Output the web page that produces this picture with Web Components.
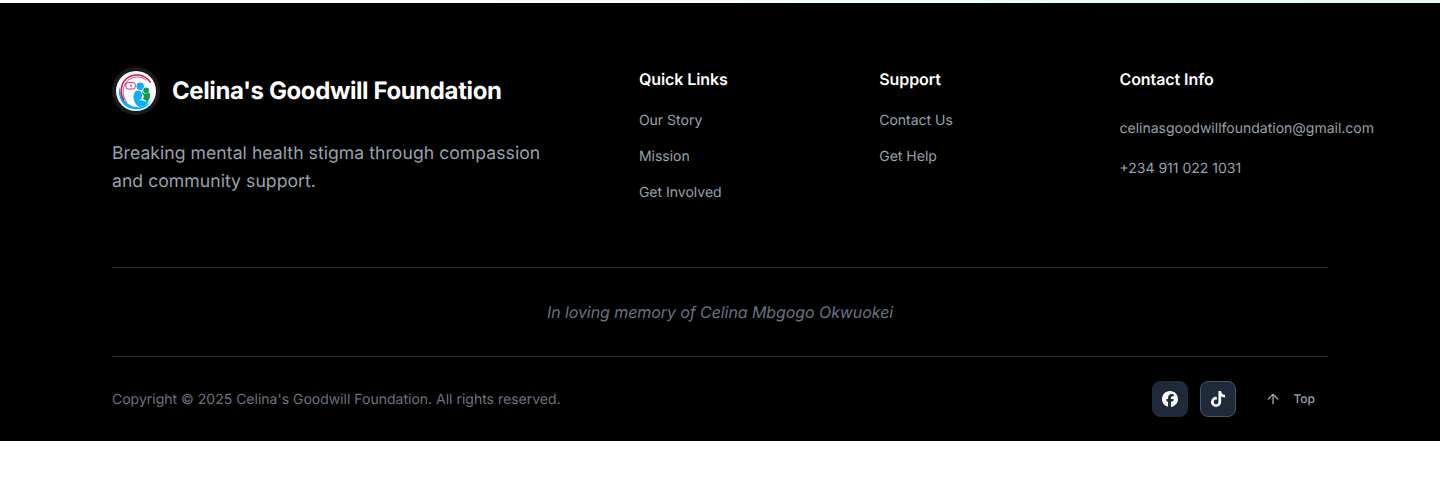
<!DOCTYPE html>
<html lang="en">
<head>
<meta charset="utf-8">
<title>Celina's Goodwill Foundation</title>
<style>
body{margin:0;background:#fff;font-family:Inter,"Liberation Sans",sans-serif;-webkit-font-smoothing:antialiased;text-rendering:geometricPrecision}
</style>
</head>
<body>
<site-footer></site-footer>
<script>
const define = (name, html) => customElements.define(name, class extends HTMLElement {
  constructor() {
    super();
    this.attachShadow({mode: 'open'}).innerHTML = html;
  }
});

define('brand-logo', `
<style>
:host{display:block;width:40px;height:40px;padding:4px;border-radius:50%;background:#1a1a1a}
svg{display:block}
</style>
<svg width="40" height="40" viewBox="0 0 40 40" fill="none">
  <circle cx="20" cy="20" r="20" fill="#fff"/>
  <path d="M3.500 16C.8 26 7 37.800 19.500 38.300c7.500 .3 13-3.300 15.500-8.300-4 4.500-9 6.800-14.500 6C12 35.500 4.500 28 3.500 16Z" fill="#0aaeff"/>
  <path d="M8 29.500C3.500 22.500 4.500 13.500 10 8 17 1.800 28.500 2.500 34.500 11.500" stroke="#cf175f" stroke-width="1.500"/>
  <path d="M11 32C5.500 25 5.500 14.500 12.500 9c6-4.500 13.500-3.500 18 .5" stroke="#cf175f" stroke-width=".8"/>
  <rect x="9.800" y="11.500" width="9.500" height="6.500" rx="2.500" fill="#fff" stroke="#cf175f" stroke-width=".9"/>
  <path d="M15 14.200v2.300M14 14.200h2" stroke="#cf175f" stroke-width=".8"/>
  <circle cx="24.200" cy="15.300" r="3.700" fill="#0aaeff"/>
  <circle cx="30.200" cy="19.300" r="2.900" fill="#0a9f50"/>
  <path d="M18.500 21.500c2.500-3 6-2.500 7.500 1 .8 2.500-1 4.500-.5 6 1 2 4 2 7.500 1-1.500 4.500-5 6-9.500 6.500-5-2.500-7.500-9-5-14.500Z" fill="#0aaeff"/>
  <path d="M25.500 19.500c1 2.300 3 3.500 5 3l2.800-1c1.700 3 .7 6.500-2.300 9-1.500-1.500-3.500-2-4.500-2 1.500-1.500 2-4 0-5.500Z" fill="#0a9f50"/>
  <path d="M23.500 29c2.500-.8 4.500-.3 6.500 1.500" stroke="#fff" stroke-width=".8"/>
</svg>`);

define('brand-block', `
<style>
:host{display:block}
.name{display:flex;align-items:center;gap:12px;color:#fff;font-size:24px;line-height:32px;font-weight:700;letter-spacing:-.4px;white-space:nowrap}
p{margin:25px 0 0;font-size:17.6px;line-height:28px;letter-spacing:.045px;color:#99a1af;max-width:448px}
</style>
<div class="name"><brand-logo></brand-logo><span><slot name="name"></slot></span></div>
<p><slot></slot></p>`);

define('link-column', `
<style>
:host{display:block}
h3{margin:0 0 18px;font-size:16px;line-height:24px;font-weight:600;letter-spacing:-.08px;color:#fff}
nav{display:flex;flex-direction:column;gap:var(--gap,12px);padding-top:var(--inset,0)}
</style>
<h3><slot name="title"></slot></h3><nav><slot></slot></nav>`);

define('footer-link', `
<style>
:host{display:block;font-size:14px;line-height:24px;color:#99a1af;white-space:nowrap}
</style><slot></slot>`);

define('social-button', `
<style>
:host{display:flex;box-sizing:border-box;width:36px;height:36px;align-items:center;justify-content:center;border-radius:8px;background:#1e2939;border:1px solid var(--edge,#1e2939);color:#fff}
</style><slot></slot>`);

define('top-button', `
<style>
:host{display:flex;align-items:center;gap:12px;margin-left:17px;padding-right:13px;font-size:12px;line-height:16px;font-weight:500;color:#99a1af}
svg{display:block}
</style>
<svg width="16" height="16" viewBox="0 0 24 24" fill="none" stroke="currentColor" stroke-width="2" stroke-linecap="round" stroke-linejoin="round"><path d="m5 12 7-7 7 7M12 19V5"/></svg><slot></slot>`);

define('site-footer', `
<style>
:host{display:block;padding-top:3px;background:linear-gradient(90deg,#fff,#f6fffa 50%,#e6faf0)}
footer{height:438px;background:#000;box-sizing:border-box;padding:64px 112px 0}
.grid{display:grid;grid-template-columns:494.9px repeat(3,208.300px);column-gap:32px;height:200px;align-items:start}
.contact{--gap:16px;--inset:8px}
.memory{border:solid #1e2939;border-width:1px 0;height:88px;display:flex;align-items:center;justify-content:center;font-size:16px;font-style:italic;letter-spacing:-.08px;color:#6a7282}
.bar{display:flex;align-items:center;justify-content:space-between;height:84px;font-size:14px;color:#6a7282}
.actions{display:flex;align-items:center;gap:12px}
svg{display:block}
</style>
<footer>
  <div class="grid">
    <brand-block><span slot="name">Celina's Goodwill Foundation</span>Breaking mental health stigma through compassion and community support.</brand-block>
    <link-column><span slot="title">Quick Links</span><footer-link>Our Story</footer-link><footer-link>Mission</footer-link><footer-link>Get Involved</footer-link></link-column>
    <link-column><span slot="title">Support</span><footer-link>Contact Us</footer-link><footer-link>Get Help</footer-link></link-column>
    <link-column class="contact"><span slot="title">Contact Info</span><footer-link>celinasgoodwillfoundation@gmail.com</footer-link><footer-link>+234 911 022 1031</footer-link></link-column>
  </div>
  <div class="memory"><span>In loving memory of Celina Mbgogo Okwuokei</span></div>
  <div class="bar">
    <span class="copy">Copyright © 2025 Celina's Goodwill Foundation. All rights reserved.</span>
    <div class="actions">
      <social-button><svg width="16" height="16" viewBox="0 0 512 512" fill="currentColor"><path d="M512 256C512 114.600 397.400 0 256 0S0 114.600 0 256c0 120 82.700 220.800 194.200 248.500V334.200h-52.800V256h52.800v-33.700c0-87.100 39.400-127.500 125-127.500 16.200 0 44.200 3.200 55.700 6.400v70.800c-6-.6-16.500-1-29.600-1-42 0-58.200 15.900-58.200 57.200V256h83.600l-14.400 78.200h-69.300v175.900C413.800 494.800 512 386.900 512 256Z"/></svg></social-button>
      <social-button style="--edge:#4a5565"><svg width="14" height="16" viewBox="0 0 448 512" fill="currentColor"><path d="M448 209.900a210.100 210.100 0 0 1-122.800-39.300v178.800A162.600 162.600 0 1 1 185 188.300v89.900a74.600 74.600 0 1 0 52.200 71.200V0h88a121.200 121.200 0 0 0 1.900 22.200 122.200 122.200 0 0 0 53.900 80.200 121.400 121.400 0 0 0 67 20.100Z"/></svg></social-button>
      <top-button>Top</top-button>
    </div>
  </div>
</footer>`);
</script>
</body>
</html>
